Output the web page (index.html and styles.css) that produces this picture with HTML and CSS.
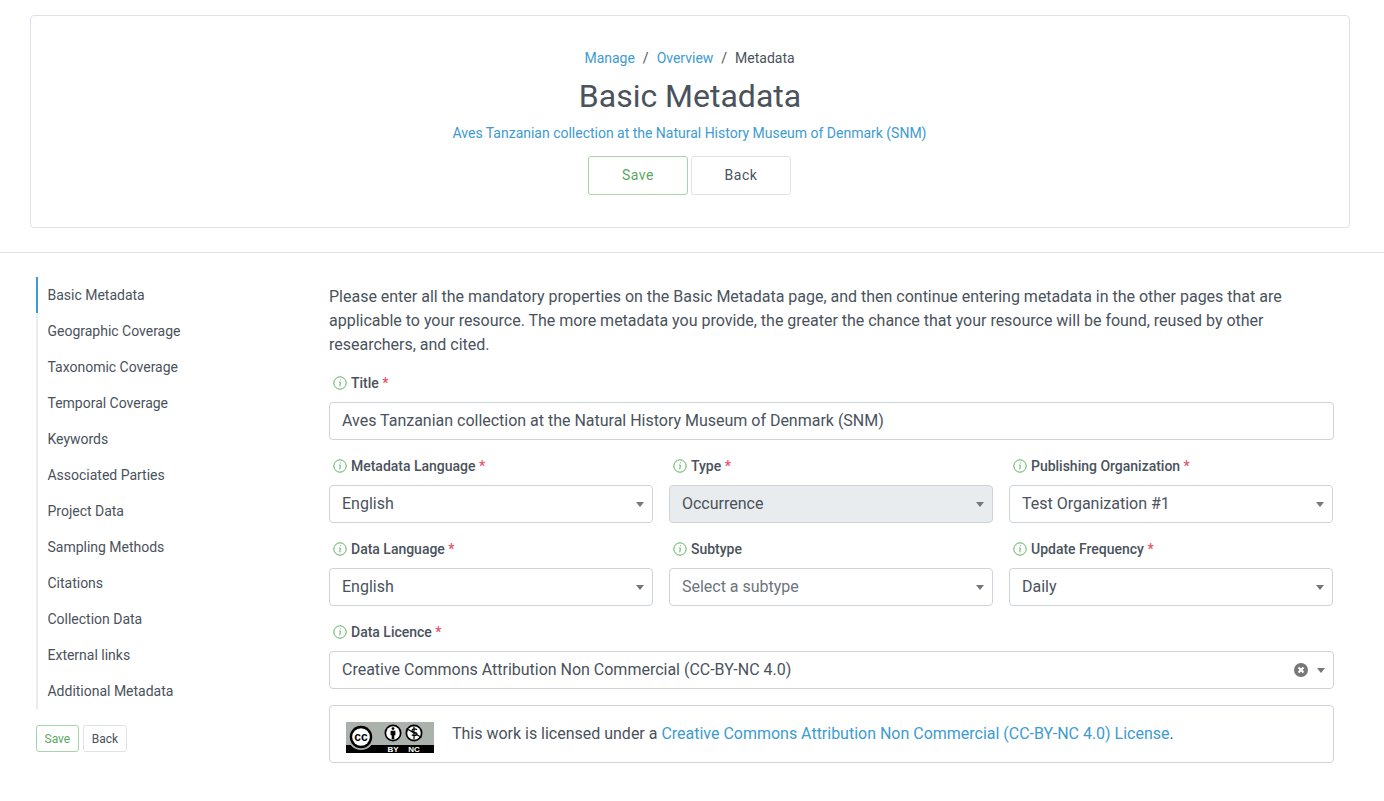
FILE: index.html
```html
<!DOCTYPE html>
<html lang="en">
<head>
  <meta charset="UTF-8" />
  <title>Basic Metadata</title>
  <link rel="stylesheet" href="styles.css">
</head>
<body>
  <header class="page-top">
    <div class="top-card">
      <nav class="crumbs">
        <a href="#">Manage</a><span class="sep">/</span><a href="#">Overview</a><span class="sep">/</span><span>Metadata</span>
      </nav>
      <h1>Basic Metadata</h1>
      <a class="resource-link" href="#">Aves Tanzanian collection at the Natural History Museum of Denmark (SNM)</a>
      <div class="top-actions">
        <button class="btn btn-save">Save</button>
        <button class="btn">Back</button>
      </div>
    </div>
  </header>

  <main class="content">
    <aside class="side">
      <ul class="side-nav">
        <li class="active">Basic Metadata</li>
        <li>Geographic Coverage</li>
        <li>Taxonomic Coverage</li>
        <li>Temporal Coverage</li>
        <li>Keywords</li>
        <li>Associated Parties</li>
        <li>Project Data</li>
        <li>Sampling Methods</li>
        <li>Citations</li>
        <li>Collection Data</li>
        <li>External links</li>
        <li>Additional Metadata</li>
      </ul>
      <div class="side-actions">
        <button class="btn btn-small btn-save">Save</button>
        <button class="btn btn-small">Back</button>
      </div>
    </aside>

    <section class="form">
      <p class="intro">Please enter all the mandatory properties on the Basic Metadata page, and then continue entering metadata in the other pages that are applicable to your resource. The more metadata you provide, the greater the chance that your resource will be found, reused by other researchers, and cited.</p>

      <div class="field">
        <label><svg class="info" viewBox="0 0 14 14"><circle cx="7" cy="7" r="6.2"/><path d="M7.4 3.4v.9M6.2 6h1.1l-.5 4.4"/></svg>Title <i>*</i></label>
        <div class="control">Aves Tanzanian collection at the Natural History Museum of Denmark (SNM)</div>
      </div>

      <div class="three">
        <div class="field">
          <label><svg class="info" viewBox="0 0 14 14"><circle cx="7" cy="7" r="6.2"/><path d="M7.4 3.4v.9M6.2 6h1.1l-.5 4.4"/></svg>Metadata Language <i>*</i></label>
          <div class="control select">English</div>
        </div>
        <div class="field">
          <label><svg class="info" viewBox="0 0 14 14"><circle cx="7" cy="7" r="6.2"/><path d="M7.4 3.4v.9M6.2 6h1.1l-.5 4.4"/></svg>Type <i>*</i></label>
          <div class="control select disabled">Occurrence</div>
        </div>
        <div class="field">
          <label><svg class="info" viewBox="0 0 14 14"><circle cx="7" cy="7" r="6.2"/><path d="M7.4 3.4v.9M6.2 6h1.1l-.5 4.4"/></svg>Publishing Organization <i>*</i></label>
          <div class="control select">Test Organization #1</div>
        </div>
        <div class="field">
          <label><svg class="info" viewBox="0 0 14 14"><circle cx="7" cy="7" r="6.2"/><path d="M7.4 3.4v.9M6.2 6h1.1l-.5 4.4"/></svg>Data Language <i>*</i></label>
          <div class="control select">English</div>
        </div>
        <div class="field">
          <label><svg class="info" viewBox="0 0 14 14"><circle cx="7" cy="7" r="6.2"/><path d="M7.4 3.4v.9M6.2 6h1.1l-.5 4.4"/></svg>Subtype</label>
          <div class="control select placeholder">Select a subtype</div>
        </div>
        <div class="field">
          <label><svg class="info" viewBox="0 0 14 14"><circle cx="7" cy="7" r="6.2"/><path d="M7.4 3.4v.9M6.2 6h1.1l-.5 4.4"/></svg>Update Frequency <i>*</i></label>
          <div class="control select">Daily</div>
        </div>
      </div>

      <div class="field">
        <label><svg class="info" viewBox="0 0 14 14"><circle cx="7" cy="7" r="6.2"/><path d="M7.4 3.4v.9M6.2 6h1.1l-.5 4.4"/></svg>Data Licence <i>*</i></label>
        <div class="control select">Creative Commons Attribution Non Commercial (CC-BY-NC 4.0)
          <svg class="clear" viewBox="0 0 14 14"><circle cx="7" cy="7" r="7"/><path d="M4.500 4.500l5 5M9.500 4.500l-5 5"/></svg>
        </div>
      </div>

      <div class="licence">
        <svg class="cc-badge" width="88" height="31" viewBox="0 0 88 31">
          <rect width="88" height="31" fill="#aab2ab"/>
          <rect y="23" width="88" height="8" fill="#000"/>
          <circle cx="15" cy="15" r="13" fill="#aab2ab"/>
          <circle cx="15" cy="15" r="11.200" fill="#000"/>
          <circle cx="15" cy="15" r="8.800" fill="#fff"/>
          <text x="15" y="18.500" class="cc-mark">cc</text>
          <circle cx="47" cy="11" r="8.500" fill="#000"/>
          <circle cx="47" cy="11" r="6.800" fill="#fff"/>
          <circle cx="47" cy="6.600" r="1.400" fill="#000"/>
          <path d="M44.600 8.800h4.800v4.400h-1.100v4h-2.600v-4h-1.100z" fill="#000"/>
          <circle cx="68" cy="11" r="8.500" fill="#000"/>
          <circle cx="68" cy="11" r="6.800" fill="#fff"/>
          <path d="M60.500 6.500l15 9" stroke="#000" stroke-width="1.300"/>
          <path d="M71 7.800c-1.500-1.200-5-1.300-5 .8 0 2.400 5 .9 5 3.300 0 2.100-3.500 2-5.300.8M68 4.500v13" stroke="#000" stroke-width="1.200" fill="none"/>
          <text x="47" y="30" class="cc-tag">BY</text>
          <text x="68" y="30" class="cc-tag">NC</text>
        </svg>
        <span>This work is licensed under a <a href="#">Creative Commons Attribution Non Commercial (CC-BY-NC 4.0) License</a>.</span>
      </div>
    </section>
  </main>
</body>
</html>
```

FILE: styles.css
```css
* {
  box-sizing: border-box;
}
body {
  margin: 0;
  background: #fff;
  color: #4a525c;
  font-family: Roboto, "Liberation Sans", sans-serif;
  font-size: 16px;
  letter-spacing: -0.01px;
}
a {
  color: #3d9bd0;
  text-decoration: none;
}

/* top */
.page-top {
  padding: 15px 34px 24px 30px;
  border-bottom: 1px solid #dee2e6;
}
.top-card {
  height: 213px;
  border: 1px solid #dee2e6;
  border-radius: 4px;
  padding-top: 33px;
  text-align: center;
}
.crumbs {
  padding-right: 1px;
  font-size: 14px;
  line-height: 18px;
}
.sep {
  margin: 0 8px;
}
h1 {
  margin: 8px 0 7px;
  font-size: 32px;
  font-weight: 400;
  line-height: 42px;
  color: #4a525c;
}
.resource-link {
  display: block;
  padding-right: 1px;
  font-size: 14px;
  line-height: 18px;
}
.top-actions {
  display: flex;
  justify-content: center;
  gap: 3px;
  margin-top: 14px;
  padding-right: 1px;
}
.top-actions .btn {
  padding-bottom: 2px;
}
.btn {
  width: 100px;
  height: 39px;
  padding: 0;
  background: #fff;
  color: #4a525c;
  border: 1px solid #dee2e6;
  border-radius: 3px;
  font-family: inherit;
  font-size: 14px;
  letter-spacing: 0.5px;
}
.btn-save {
  color: #5aa85f;
  border-color: #a5d6a7;
}
.btn-small {
  width: auto;
  height: 27px;
  padding: 0 8px;
  font-size: 12px;
  letter-spacing: 0;
}
.btn-small.btn-save {
  padding: 0 7.5px;
}

/* layout */
.content {
  display: flex;
  padding: 24px 50px 0 36px;
}
.side {
  width: 293px;
  flex: none;
}
.side-nav {
  list-style: none;
  margin: 0;
  padding: 0;
  border-left: 2px solid #e9ecef;
}
.side-nav li {
  height: 36px;
  padding-left: 9.5px;
  font-size: 14px;
  line-height: 36px;
}
.side-nav li.active {
  margin-left: -2px;
  border-left: 2px solid #3d9bd0;
}
.side-actions {
  display: flex;
  gap: 4px;
  margin-top: 16px;
}

/* form */
.form {
  flex: 1;
}
.intro {
  margin: 8px 0 17px;
  font-size: 16px;
  line-height: 24px;
}
.field label {
  display: flex;
  align-items: center;
  height: 20px;
  margin: 0 0 8px 4px;
  padding-bottom: 2px;
  font-size: 14px;
  font-weight: 500;
  white-space: pre;
}
.field label i {
  color: #e8506a;
  font-style: normal;
}
.info {
  width: 14px;
  height: 14px;
  margin-right: 4px;
  fill: none;
  stroke: #5cb25f;
  stroke-width: 1;
}
.control {
  position: relative;
  height: 38px;
  padding: 0 12px;
  border: 1px solid #ced4da;
  border-radius: 4px;
  line-height: 36px;
  color: #4a525c;
  background: #fff;
}
.select::after {
  content: "";
  position: absolute;
  top: 16px;
  right: 8px;
  border-top: 5px solid #777;
  border-left: 4px solid transparent;
  border-right: 4px solid transparent;
}
.disabled {
  background: #e9ecef;
}
.placeholder {
  color: #6c757d;
}
.clear {
  position: absolute;
  top: 11px;
  right: 25px;
  width: 14px;
  height: 14px;
  fill: #777;
  stroke: #fff;
  stroke-width: 2;
}
.clear circle {
  stroke: none;
}
.three {
  display: grid;
  grid-template-columns: repeat(3, 324px);
  column-gap: 16px;
  row-gap: 17px;
  margin: 17px 0;
}
.licence {
  display: flex;
  align-items: center;
  gap: 18px;
  height: 58px;
  margin-top: 16px;
  padding: 0 0 2px 16px;
  border: 1px solid #ced4da;
  border-radius: 4px;
}
.cc-badge {
  margin-top: 9px;
}
.cc-mark {
  font-family: "Liberation Sans", sans-serif;
  font-size: 12px;
  font-weight: 700;
  text-anchor: middle;
  fill: #000;
}
.cc-tag {
  font-family: "Liberation Sans", sans-serif;
  font-size: 8px;
  font-weight: 700;
  text-anchor: middle;
  fill: #fff;
}
```
